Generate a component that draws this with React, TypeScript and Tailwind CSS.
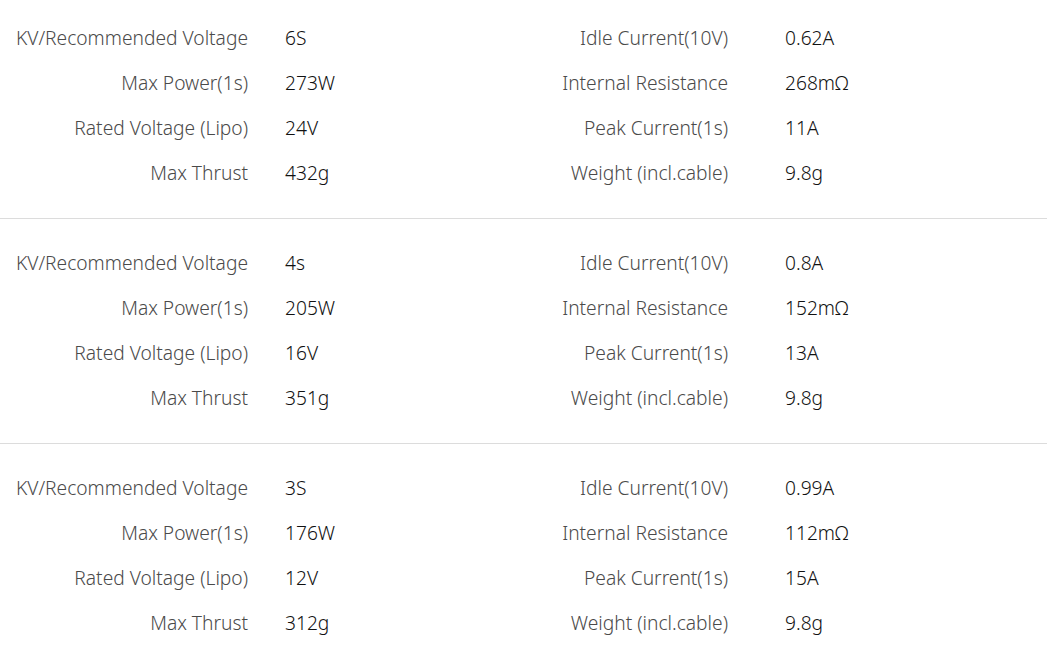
import React from 'react';

interface SpecRow {
  leftLabel: string;
  leftValue: string;
  rightLabel: string;
  rightValue: string;
}

const blocks: SpecRow[][] = [
  [
    { leftLabel: 'KV/Recommended Voltage', leftValue: '6S', rightLabel: 'Idle Current(10V)', rightValue: '0.62A' },
    { leftLabel: 'Max Power(1s)', leftValue: '273W', rightLabel: 'Internal Resistance', rightValue: '268mΩ' },
    { leftLabel: 'Rated Voltage (Lipo)', leftValue: '24V', rightLabel: 'Peak Current(1s)', rightValue: '11A' },
    { leftLabel: 'Max Thrust', leftValue: '432g', rightLabel: 'Weight (incl.cable)', rightValue: '9.8g' },
  ],
  [
    { leftLabel: 'KV/Recommended Voltage', leftValue: '4s', rightLabel: 'Idle Current(10V)', rightValue: '0.8A' },
    { leftLabel: 'Max Power(1s)', leftValue: '205W', rightLabel: 'Internal Resistance', rightValue: '152mΩ' },
    { leftLabel: 'Rated Voltage (Lipo)', leftValue: '16V', rightLabel: 'Peak Current(1s)', rightValue: '13A' },
    { leftLabel: 'Max Thrust', leftValue: '351g', rightLabel: 'Weight (incl.cable)', rightValue: '9.8g' },
  ],
  [
    { leftLabel: 'KV/Recommended Voltage', leftValue: '3S', rightLabel: 'Idle Current(10V)', rightValue: '0.99A' },
    { leftLabel: 'Max Power(1s)', leftValue: '176W', rightLabel: 'Internal Resistance', rightValue: '112mΩ' },
    { leftLabel: 'Rated Voltage (Lipo)', leftValue: '12V', rightLabel: 'Peak Current(1s)', rightValue: '15A' },
    { leftLabel: 'Max Thrust', leftValue: '312g', rightLabel: 'Weight (incl.cable)', rightValue: '9.8g' },
  ],
];

const Row: React.FC<{ row: SpecRow }> = ({ row }) => (
  <div className="flex items-center h-[45px] text-[19.2px] font-light whitespace-nowrap">
    <div className="w-[248px] pl-[12px] text-right text-[#4a4a4a]">{row.leftLabel}</div>
    <div className="w-[232px] pl-[37px] text-[#111]">{row.leftValue}</div>
    <div className="w-[248px] text-right text-[#4a4a4a]">{row.rightLabel}</div>
    <div className="pl-[57px] text-[#111]">{row.rightValue}</div>
  </div>
);

export default function App() {
  return (
    <div className="w-[1047px] h-[659px] overflow-hidden bg-white pt-[16px]" style={{ fontFamily: '"Noto Sans", "Open Sans", sans-serif' }}>
      {blocks.map((block, i) => (
        <div key={i}>
          {block.map((row) => (
            <Row key={row.leftLabel} row={row} />
          ))}
          {i < blocks.length - 1 && <div className="my-[22px] h-px bg-[#dcdcdc]" />}
        </div>
      ))}
    </div>
  );
}
